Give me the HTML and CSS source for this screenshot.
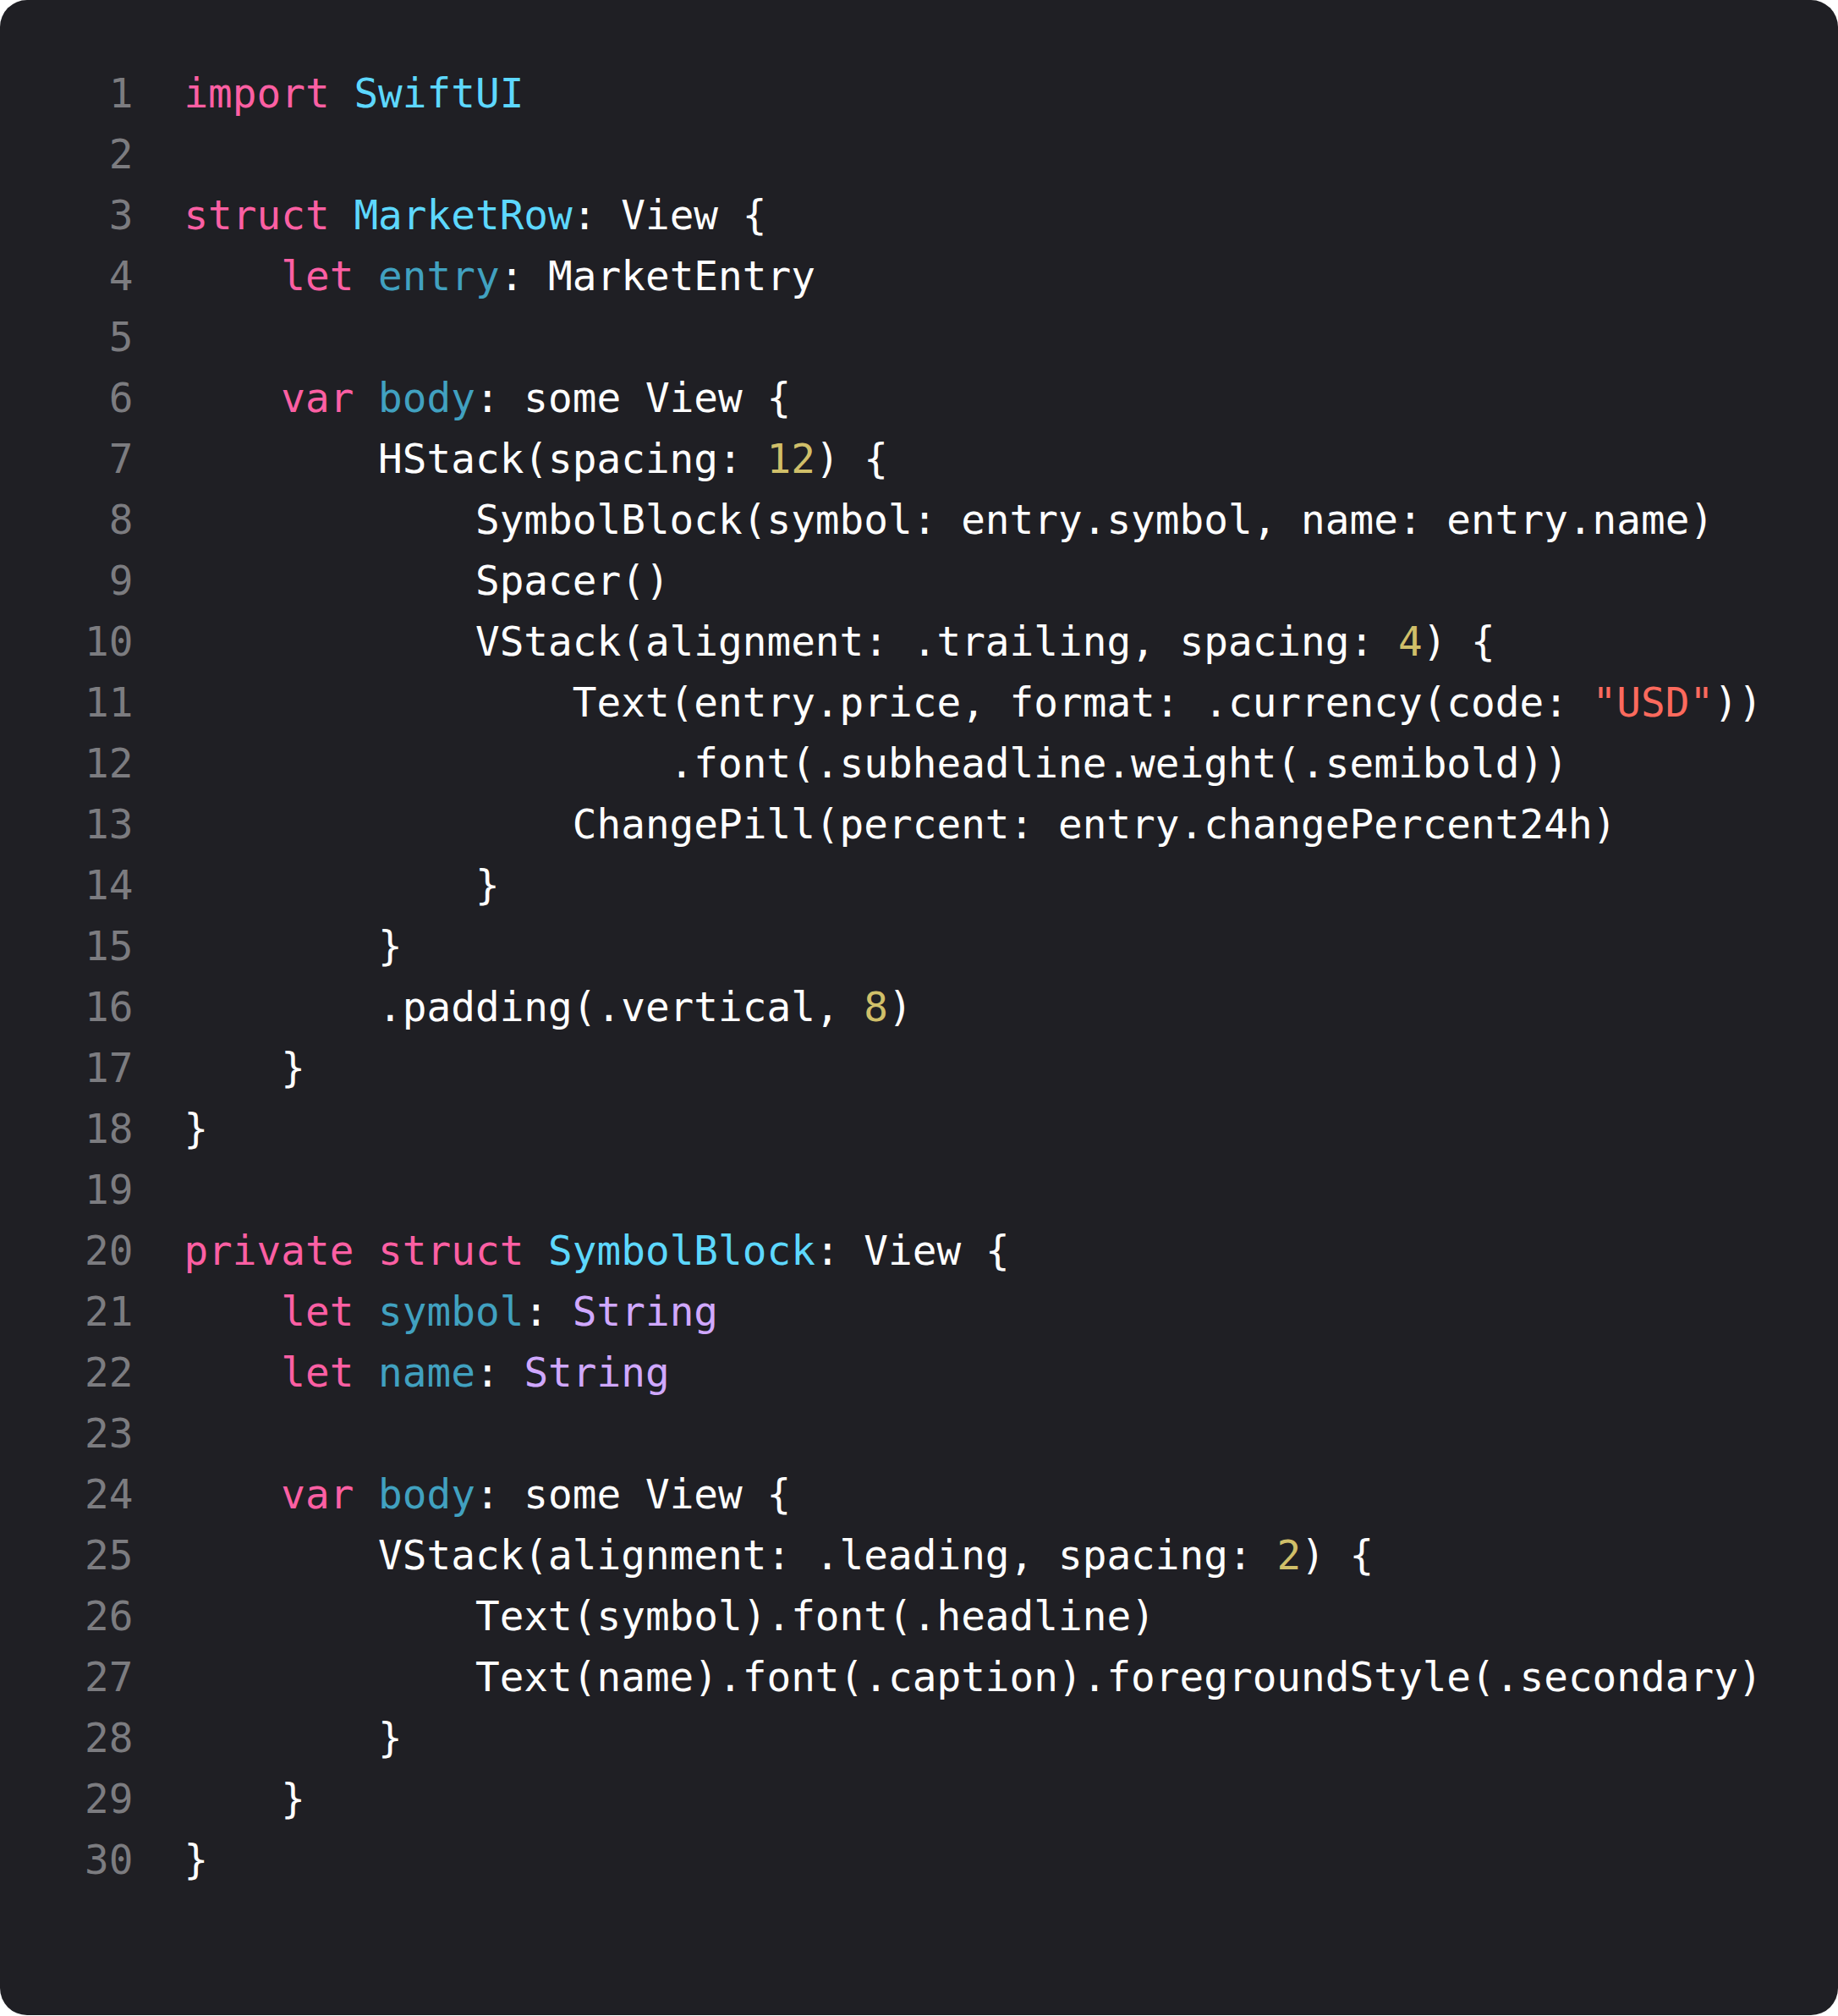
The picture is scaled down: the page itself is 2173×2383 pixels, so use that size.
FILE: index.html
```html
<!DOCTYPE html>
<html lang="en">
<head>
<meta charset="utf-8">
<title>MarketRow.swift</title>
<link rel="stylesheet" href="styles.css">
</head>
<body>
<main class="editor">
<div class="line"><span class="ln">1</span><span class="code"><span class="kw">import</span> <span class="ty">SwiftUI</span></span></div>
<div class="line"><span class="ln">2</span><span class="code"></span></div>
<div class="line"><span class="ln">3</span><span class="code"><span class="kw">struct</span> <span class="ty">MarketRow</span>: View {</span></div>
<div class="line"><span class="ln">4</span><span class="code">    <span class="kw">let</span> <span class="dc">entry</span>: MarketEntry</span></div>
<div class="line"><span class="ln">5</span><span class="code"></span></div>
<div class="line"><span class="ln">6</span><span class="code">    <span class="kw">var</span> <span class="dc">body</span>: some View {</span></div>
<div class="line"><span class="ln">7</span><span class="code">        HStack(spacing: <span class="nu">12</span>) {</span></div>
<div class="line"><span class="ln">8</span><span class="code">            SymbolBlock(symbol: entry.symbol, name: entry.name)</span></div>
<div class="line"><span class="ln">9</span><span class="code">            Spacer()</span></div>
<div class="line"><span class="ln">10</span><span class="code">            VStack(alignment: .trailing, spacing: <span class="nu">4</span>) {</span></div>
<div class="line"><span class="ln">11</span><span class="code">                Text(entry.price, format: .currency(code: <span class="st">"USD"</span>))</span></div>
<div class="line"><span class="ln">12</span><span class="code">                    .font(.subheadline.weight(.semibold))</span></div>
<div class="line"><span class="ln">13</span><span class="code">                ChangePill(percent: entry.changePercent24h)</span></div>
<div class="line"><span class="ln">14</span><span class="code">            }</span></div>
<div class="line"><span class="ln">15</span><span class="code">        }</span></div>
<div class="line"><span class="ln">16</span><span class="code">        .padding(.vertical, <span class="nu">8</span>)</span></div>
<div class="line"><span class="ln">17</span><span class="code">    }</span></div>
<div class="line"><span class="ln">18</span><span class="code">}</span></div>
<div class="line"><span class="ln">19</span><span class="code"></span></div>
<div class="line"><span class="ln">20</span><span class="code"><span class="kw">private</span> <span class="kw">struct</span> <span class="ty">SymbolBlock</span>: View {</span></div>
<div class="line"><span class="ln">21</span><span class="code">    <span class="kw">let</span> <span class="dc">symbol</span>: <span class="ot">String</span></span></div>
<div class="line"><span class="ln">22</span><span class="code">    <span class="kw">let</span> <span class="dc">name</span>: <span class="ot">String</span></span></div>
<div class="line"><span class="ln">23</span><span class="code"></span></div>
<div class="line"><span class="ln">24</span><span class="code">    <span class="kw">var</span> <span class="dc">body</span>: some View {</span></div>
<div class="line"><span class="ln">25</span><span class="code">        VStack(alignment: .leading, spacing: <span class="nu">2</span>) {</span></div>
<div class="line"><span class="ln">26</span><span class="code">            Text(symbol).font(.headline)</span></div>
<div class="line"><span class="ln">27</span><span class="code">            Text(name).font(.caption).foregroundStyle(.secondary)</span></div>
<div class="line"><span class="ln">28</span><span class="code">        }</span></div>
<div class="line"><span class="ln">29</span><span class="code">    }</span></div>
<div class="line"><span class="ln">30</span><span class="code">}</span></div>
</main>
</body>
</html>
```

FILE: styles.css
```css
html, body {
  margin: 0;
  padding: 0;
  background: #ffffff;
}

.editor {
  box-sizing: border-box;
  width: 2173px;
  height: 2382px;
  background: #1f1f24;
  border-radius: 32px;
  padding: 75px 0 0 100px;
  font-family: "DejaVu Sans Mono", "Liberation Mono", monospace;
  font-size: 47.7px;
  line-height: 72px;
  color: #ffffff;
}

.line {
  display: flex;
  align-items: baseline;
  height: 72px;
}

.ln {
  width: 2ch;
  flex: none;
  text-align: right;
  color: #7c7c80;
  margin-right: 60px;
}

.code {
  white-space: pre;
}

.kw { color: #fc5fa3; }
.ty { color: #5dd8ff; }
.dc { color: #41a1c0; }
.ot { color: #d0a8ff; }
.nu { color: #d0bf69; }
.st { color: #fc6a5d; }
```
